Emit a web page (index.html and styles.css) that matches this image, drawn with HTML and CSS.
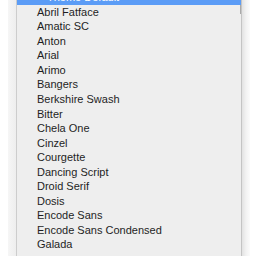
FILE: index.html
```html
<!DOCTYPE html>
<html>
<head>
<meta charset="utf-8">
<link rel="stylesheet" href="styles.css">
</head>
<body>
<div class="screen">
  <div class="gap-left"></div>
  <div class="shadow-left"></div>
  <div class="menu">
    <ul class="list">
      <li class="item selected">Theme Default</li>
      <li class="item">Abril Fatface</li>
      <li class="item">Amatic SC</li>
      <li class="item">Anton</li>
      <li class="item">Arial</li>
      <li class="item">Arimo</li>
      <li class="item">Bangers</li>
      <li class="item">Berkshire Swash</li>
      <li class="item">Bitter</li>
      <li class="item">Chela One</li>
      <li class="item">Cinzel</li>
      <li class="item">Courgette</li>
      <li class="item">Dancing Script</li>
      <li class="item">Droid Serif</li>
      <li class="item">Dosis</li>
      <li class="item">Encode Sans</li>
      <li class="item">Encode Sans Condensed</li>
      <li class="item">Galada</li>
    </ul>
    <div class="scroll-thumb"></div>
  </div>
  <div class="shadow-right"></div>
</div>
</body>
</html>
```
FILE: styles.css
```css
html, body {
  margin: 0;
  padding: 0;
  background: #ffffff;
}
.screen {
  display: flex;
  width: 256px;
  height: 256px;
  overflow: hidden;
}
.gap-left {
  width: 8px;
  flex: none;
  background: #ffffff;
}
.shadow-left {
  width: 8px;
  flex: none;
  background: linear-gradient(to right, #f6f6f6, #eeeeee);
}
.menu {
  position: relative;
  width: 224px;
  flex: none;
  height: 256px;
  overflow: hidden;
  background: #eeeeee;
  border-left: 1px solid #cdcdcd;
  border-right: 1px solid #c4c4c4;
}
.list {
  list-style: none;
  margin: -9.84px 0 0 0;
  padding: 0;
}
.item {
  height: 14.56px;
  line-height: 14.56px;
  padding-left: 20px;
  font-family: "Liberation Sans", Arial, sans-serif;
  font-size: 11px;
  color: #1e1e1e;
  white-space: nowrap;
}
.selected {
  background: #5b9cf6;
  color: #ffffff;
  padding-left: 30px;
}
.scroll-thumb {
  position: absolute;
  right: 0;
  top: 5px;
  width: 1px;
  height: 9px;
  background: #a9a9a9;
}
.shadow-right {
  width: 8px;
  flex: none;
  background: linear-gradient(to right, #e2e2e2, #f2f2f2 50%, #fbfbfb);
}
```
